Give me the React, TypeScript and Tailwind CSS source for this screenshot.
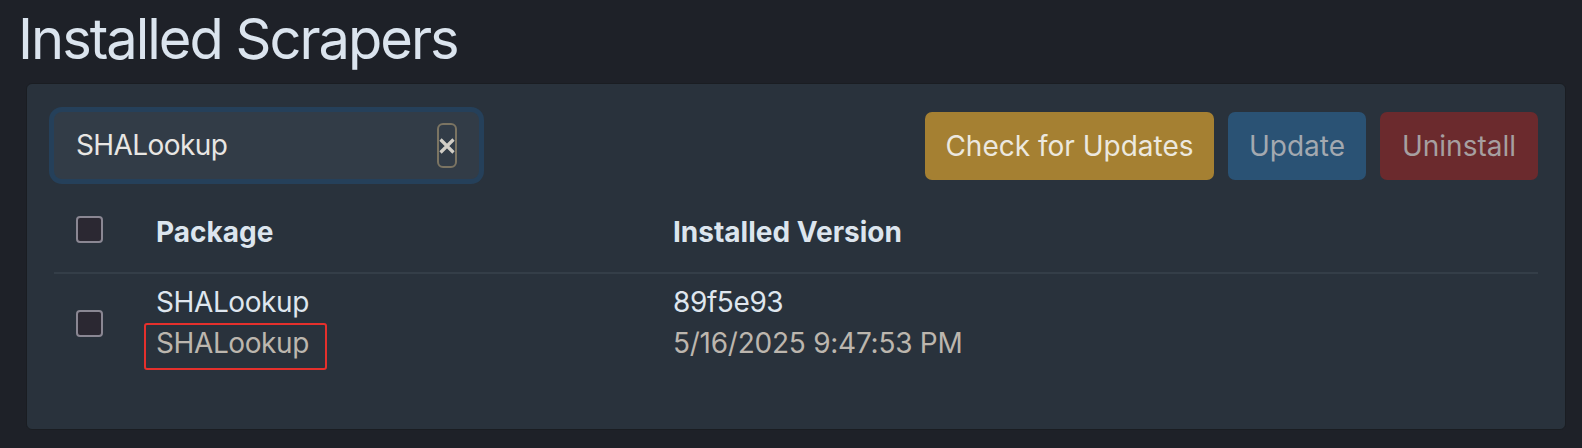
import React from "react";

function Box({ className = "" }: { className?: string }) {
  return (
    <div
      className={
        "w-[27px] h-[27px] rounded-[4px] border-2 border-[#8a8793] bg-[#2b2832] " +
        className
      }
    />
  );
}

export default function App() {
  return (
    <div className="w-[1582px] h-[448px] bg-[#1e2128] font-['Inter',sans-serif] overflow-hidden">
      <h1 className="ml-[18px] pt-[11px] text-[56px] leading-[56px] font-normal text-[#dbe4ee] tracking-[-2px]">
        Installed Scrapers
      </h1>
      <div className="ml-[26px] mr-[16px] mt-[16px] rounded-[6px] border border-[#1a1d22] bg-[#29323c] px-[27px] pt-[28px] pb-[30px]">
        <div className="flex items-start justify-between">
          <div className="flex h-[67px] w-[425px] items-center rounded-[8px] bg-[#323c47] pl-[22px] pr-[22px] shadow-[0_0_0_5px_#25405a]">
            <span className="flex-1 text-[28px] leading-[41px] text-[#e8e6e3] tracking-[-0.6px]">
              SHALookup
            </span>
            <span className="relative h-[45px] w-[20px] rounded-[6px] border-2 border-[#7b7462] text-[#d2cec6]">
              <svg
                width="16"
                height="16"
                viewBox="0 0 16 16"
                className="absolute left-[0px] top-[13px]"
              >
                <path
                  d="M1.5 1.5 L14.5 14.5 M14.5 1.5 L1.5 14.5"
                  stroke="currentColor"
                  strokeWidth="3.2"
                  strokeLinecap="butt"
                />
              </svg>
            </span>
          </div>
          <div className="flex gap-[14px]">
            <div className="flex h-[68px] w-[289px] items-center justify-center rounded-[7px] bg-[#a58032] text-[28px] text-[#ece8df]">
              Check for Updates
            </div>
            <div className="flex h-[68px] w-[138px] items-center justify-center rounded-[7px] bg-[#2a5274] text-[28px] text-[#a3a9b0]">
              Update
            </div>
            <div className="flex h-[68px] w-[158px] items-center justify-center rounded-[7px] bg-[#6b2a2d] text-[28px] text-[#a69fa0]">
              Uninstall
            </div>
          </div>
        </div>

        <div>
          <div className="flex border-b-2 border-[#343e48] pt-[31px] pb-[19px] text-[28px] leading-[42px] font-bold text-[#dce5ee]">
            <div className="w-[102px] pl-[22px] pt-[5px]">
              <Box />
            </div>
            <div className="w-[517px]">Package</div>
            <div className="flex-1">Installed Version</div>
          </div>
          <div className="flex items-center pt-[8px] pb-[35px] text-[28px] leading-[41px] tracking-[-0.4px]">
            <div className="w-[102px] pl-[22px]">
              <Box />
            </div>
            <div className="w-[517px] flex flex-col">
              <span className="text-[#dfe6ee]">SHALookup</span>
              <span className="relative text-[#bcb6ae]">
                SHALookup
                <span className="absolute left-[-12px] top-0 h-[47px] w-[183px] rounded-[3px] border-2 border-[#e5302c]" />
              </span>
            </div>
            <div className="flex-1 flex flex-col">
              <span className="text-[#dfe6ee]">89f5e93</span>
              <span className="text-[#bcb6ae] tracking-[-0.25px]">5/16/2025 9:47:53 PM</span>
            </div>
          </div>
        </div>
      </div>
    </div>
  );
}
